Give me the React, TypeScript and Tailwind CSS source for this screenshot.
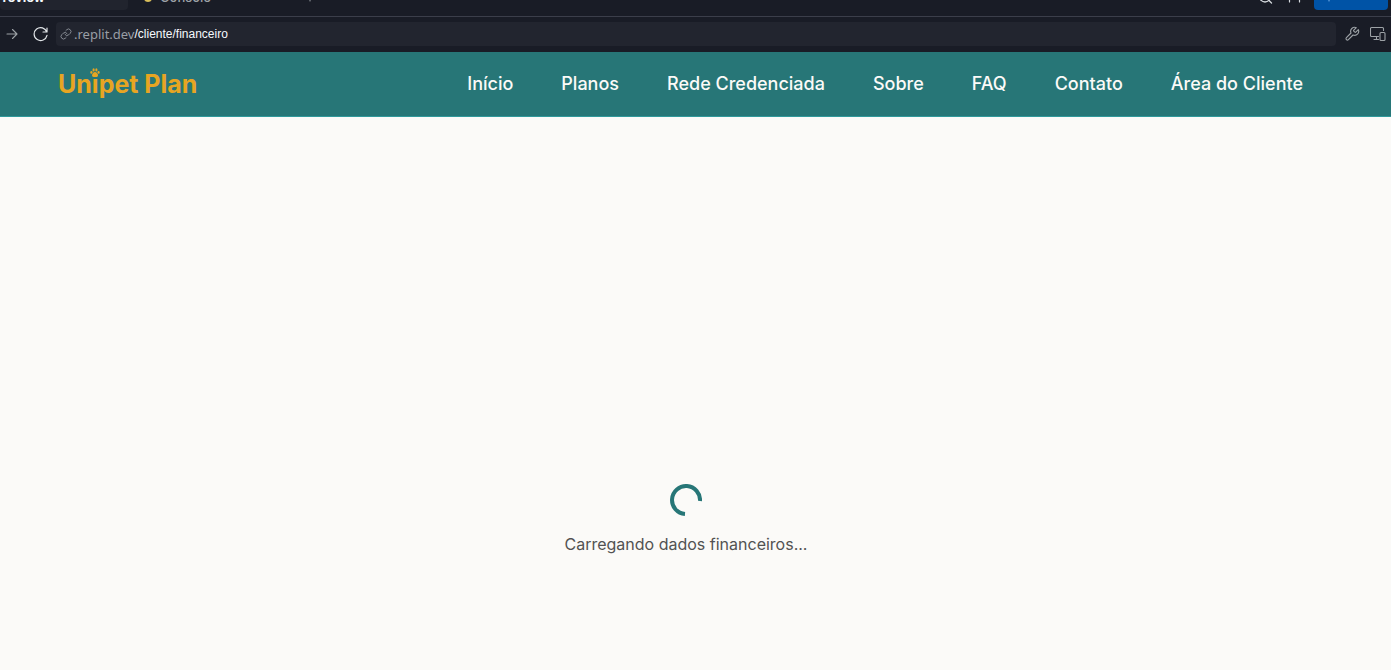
import React from "react";

const links = [
  { label: "Início", href: "/" },
  { label: "Planos", href: "/planos" },
  { label: "Rede Credenciada", href: "/rede-credenciada" },
  { label: "Sobre", href: "/sobre" },
  { label: "FAQ", href: "/faq" },
  { label: "Contato", href: "/contato" },
  { label: "Área do Cliente", href: "/cliente" },
];

const stroke = {
  fill: "none",
  stroke: "currentColor",
  strokeLinecap: "round" as const,
  strokeLinejoin: "round" as const,
};

function TabStrip() {
  return (
    <div className="flex h-4 items-end overflow-hidden text-[13px] font-medium">
      <button className="mb-1.5 flex h-7 w-32 shrink-0 items-center rounded-b bg-[#21242e] pt-1 font-bold text-[#f5f9fc]">
        <span className="-ml-1.5">Preview</span>
      </button>
      <button className="mb-1.5 ml-4 flex h-7 w-40 shrink-0 items-center gap-2 pt-1 text-[#9da2a6]">
        <span className="h-2 w-2 rounded-sm bg-[#d9bf5a]" />
        <span>Console</span>
      </button>
      <button aria-label="Nova aba" className="mb-3.5 text-[#9da2a6]">
        <svg width="12" height="12" viewBox="0 0 12 12" {...stroke}><path d="M6 1v10M1 6h10" /></svg>
      </button>
      <button aria-label="Buscar" className="mb-3 ml-auto mr-3 text-[#d5d9dd]">
        <svg width="16" height="16" viewBox="0 0 16 16" {...stroke} strokeWidth="1.3"><circle cx="7" cy="8.5" r="5.5" /><path d="m11 12.5 2.5 2.5" /></svg>
      </button>
      <button aria-label="Convidar" className="mb-3 mr-3 text-[#d5d9dd]">
        <svg width="16" height="16" viewBox="0 0 16 16" {...stroke} strokeWidth="1.2"><path d="M3.5 14v-4a3 3 0 0 1 6 0M13.5 8v6" /></svg>
      </button>
      <button aria-label="Publicar" className="mb-1.5 mr-[3px] flex h-7 w-[74px] shrink-0 rounded bg-[#0053a6] pl-3 text-[#7fb6ed]">
        <svg className="mt-2" width="12" height="12" viewBox="0 0 12 12" {...stroke}><path d="m1 6 5-5 5 5M3 4v7" /></svg>
      </button>
    </div>
  );
}

function AddressBar() {
  return (
    <div className="flex h-9 items-center border-t border-[#3b3e4a] pb-px pl-1 text-[#9da2a6]">
      <button aria-label="Avançar">
        <svg width="16" height="16" viewBox="0 0 16 16" {...stroke} strokeWidth="1.1"><path d="M3 8h10M8.5 3.5 13 8l-4.5 4.5" /></svg>
      </button>
      <button aria-label="Recarregar" className="ml-3 text-[#e1e5e8]">
        <svg width="16" height="16" viewBox="0 0 16 16" {...stroke} strokeWidth="1.2"><path d="M15 2v4h-4M14.8 6A6.5 6.5 0 1 0 15 9.4" /></svg>
      </button>
      <div className="ml-2 flex h-6 min-w-0 flex-1 items-center rounded bg-[#22252f] pl-1 leading-none">
        <svg className="shrink-0 text-[#858a92]" width="12" height="12" viewBox="0 0 24 24" {...stroke} strokeWidth="2"><path d="M10 13a5 5 0 0 0 7.54.54l3-3a5 5 0 0 0-7.07-7.07l-1.72 1.71" /><path d="M14 11a5 5 0 0 0-7.54-.54l-3 3a5 5 0 0 0 7.07 7.07l1.71-1.71" /></svg>
        <span className="ml-0.5 font-['Noto_Sans',sans-serif] text-[13px] text-[#999ea5]">.replit.dev</span>
        <span className="font-['Liberation_Sans',sans-serif] text-xs text-[#f5f9fc]">/cliente/financeiro</span>
      </div>
      <button aria-label="Ferramentas" className="ml-2">
        <svg width="16" height="16" viewBox="0 0 24 24" {...stroke} strokeWidth="1.7"><path d="M14.7 6.3a1 1 0 0 0 0 1.4l1.6 1.6a1 1 0 0 0 1.4 0l3.77-3.77a6 6 0 0 1-7.94 7.94l-6.91 6.91a2.12 2.12 0 0 1-3-3l6.91-6.91a6 6 0 0 1 7.94-7.94l-3.76 3.76z" /></svg>
      </button>
      <button aria-label="Dispositivos" className="ml-2.5 mr-[5px]">
        <svg width="16" height="16" viewBox="0 0 16 16" {...stroke} strokeWidth="1.1"><path d="M8.5 10.5h-7a1 1 0 0 1-1-1v-7a1 1 0 0 1 1-1h11a1 1 0 0 1 1 1v2M6.5 10.5v3M4 13.5h4.5" /><rect x="10" y="6.5" width="5" height="8" rx="1" /></svg>
      </button>
    </div>
  );
}

function Logo() {
  return (
    <a href="/" className="relative text-[25px] font-bold leading-8 text-[#e7a522]">
      Unipet Plan
      <svg className="absolute left-8 top-0" width="10" height="10" viewBox="0 0 10 10" fill="currentColor" aria-hidden="true">
        <ellipse cx="1.4" cy="4.4" rx="1.1" ry="1.4" />
        <ellipse cx="3.6" cy="1.9" rx="1.1" ry="1.6" />
        <ellipse cx="6.4" cy="1.9" rx="1.1" ry="1.6" />
        <ellipse cx="8.6" cy="4.4" rx="1.1" ry="1.4" />
        <path d="M5 4.1c1.5 0 3 2 3 3.4S6.6 9 5 9s-3-.1-3-1.5S3.5 4.1 5 4.1z" />
      </svg>
    </a>
  );
}

export default function App() {
  return (
    <div className="flex min-h-screen flex-col bg-[#fbfaf8] font-[Inter,sans-serif]">
      <div className="bg-[#191c26]">
        <TabStrip />
        <AddressBar />
      </div>
      <header className="border-b border-[#30999b] bg-[#277677]">
        <div className="flex h-16 items-center justify-between pl-[58px] pr-[88px]">
          <Logo />
          <nav className="flex gap-12 text-lg font-medium text-[#fbfaf8]">
            {links.map((l) => <a key={l.label} href={l.href} className="whitespace-nowrap">{l.label}</a>)}
          </nav>
        </div>
      </header>
      <main className="mr-[19px] flex flex-1 flex-col items-center pt-[367px]" role="status">
        <svg width="32" height="32" viewBox="0 0 32 32" fill="none" aria-hidden="true">
          <path d="M15 30A14 14 0 1 1 30 17" stroke="#277677" strokeWidth="4" />
        </svg>
        <p className="mt-4 text-base text-[#525252]">Carregando dados financeiros...</p>
      </main>
    </div>
  );
}
